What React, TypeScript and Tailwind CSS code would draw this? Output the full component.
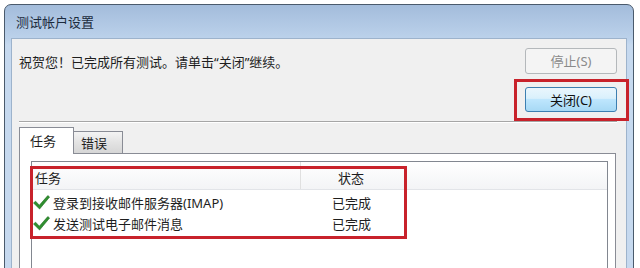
import React from "react";

const Check = () => (
  <svg width="17" height="15" viewBox="0 0 17 15" className="shrink-0">
    <path d="M0.5 8 L2.6 6.2 L6.3 10.2 L14.8 0.6 L16.6 2 L6.6 14 Z" fill="#2f8f2f" stroke="#1f6b1f" strokeWidth="0.6" strokeLinejoin="round" />
  </svg>
);

const tasks = [
  { name: "登录到接收邮件服务器(IMAP)", status: "已完成" },
  { name: "发送测试电子邮件消息", status: "已完成" },
];

export default function App() {
  return (
    <div className="w-[640px] h-[268px] overflow-hidden bg-white pt-[4px] pl-[4px] font-['Noto_Sans','Noto_Sans_CJK_SC',sans-serif] text-[13px] leading-[16px]">
      {/* window frame */}
      <div className="w-[630px] h-[300px] rounded-t-[7px] border border-[#4a5a6c] bg-[linear-gradient(to_bottom,#a3bcdb,#bcd2eb_34px,#c6d9ef_40px,#c6d9ef)]">
        {/* title bar */}
        <div className="h-[33px] flex items-center pl-[11px] text-[#1c2b3d]">测试帐户设置</div>

        {/* client area */}
        <div className="mx-[6px] h-[260px] border border-[#9db3cc] bg-[#f0f0f0]">
          <div className="flex justify-between">
            <div className="pl-[7px] pt-[15px] text-[#1e1e1e]">祝贺您！已完成所有测试。请单击“关闭”继续。</div>
            <div className="flex flex-col items-end pt-[9px] pr-[9px]">
              <button className="w-[92px] h-[26px] rounded-[3px] border border-[#b4b8bb] bg-[#f4f4f4] text-[#8a8a8a]">
                停止(S)
              </button>
              <div className="relative mt-[13px]">
                <button className="w-[92px] h-[25px] rounded-[3px] border border-[#3c7fb1] bg-[linear-gradient(to_bottom,#eaf6fd,#d9f0fc_45%,#bee6fd_50%,#a7d9f5)] text-[#111]">
                  关闭(C)
                </button>
                <div className="absolute -left-[11px] -top-[8px] -right-[12px] -bottom-[9px] border-[3px] border-[#c8222b]" />
              </div>
            </div>
          </div>

          {/* etched separator */}
          <div className="ml-[7px] mr-[9px] mt-[9px] border-t border-[#a6a6a6] border-b border-b-white" />

          {/* tabs */}
          <div className="mt-[5px] ml-[7px] flex items-end h-[25px]">
            <div className="relative z-10 -mb-px h-[27px] w-[55px] border border-b-0 border-[#898c95] bg-white pl-[10px] pt-[5px] text-[#1e1e1e]">
              任务
            </div>
            <div className="h-[22px] w-[49px] border border-l-0 border-b-0 border-[#898c95] bg-[linear-gradient(to_bottom,#f3f3f3,#e3e3e3_50%,#d6d6d6)] pl-[7px] pt-[3px] text-[#1e1e1e]">
              错误
            </div>
          </div>

          {/* tab panel */}
          <div className="ml-[7px] mr-[10px] h-[140px] border border-[#898c95] bg-white pt-[7px] pl-[11px] pr-[7px]">
            <div className="relative h-[120px] border border-[#828790] bg-white">
              <div className="flex h-[28px] border-b border-[#e2e4e8] bg-[linear-gradient(to_bottom,#ffffff,#f3f4f6)] text-[#1e1e1e]">
                <div className="w-[269px] pl-[3px] pt-[8px] border-r border-[#e0e0e0]">任务</div>
                <div className="w-[100px] pt-[8px] text-center">状态</div>
              </div>
              <div className="pt-[2px]">
                {tasks.map((t) => (
                  <div key={t.name} className="flex h-[21px] items-center text-[#1e1e1e]">
                    <div className="w-[269px] flex items-center pl-[1px]">
                      <Check />
                      <span className="ml-[3px]">{t.name}</span>
                    </div>
                    <div className="w-[101px] text-center">{t.status}</div>
                  </div>
                ))}
              </div>
              {/* annotation box */}
              <div className="absolute -left-[2px] top-[4px] w-[377px] h-[73px] border-[3px] border-[#c8222b]" />
            </div>
          </div>
        </div>
      </div>
    </div>
  );
}
